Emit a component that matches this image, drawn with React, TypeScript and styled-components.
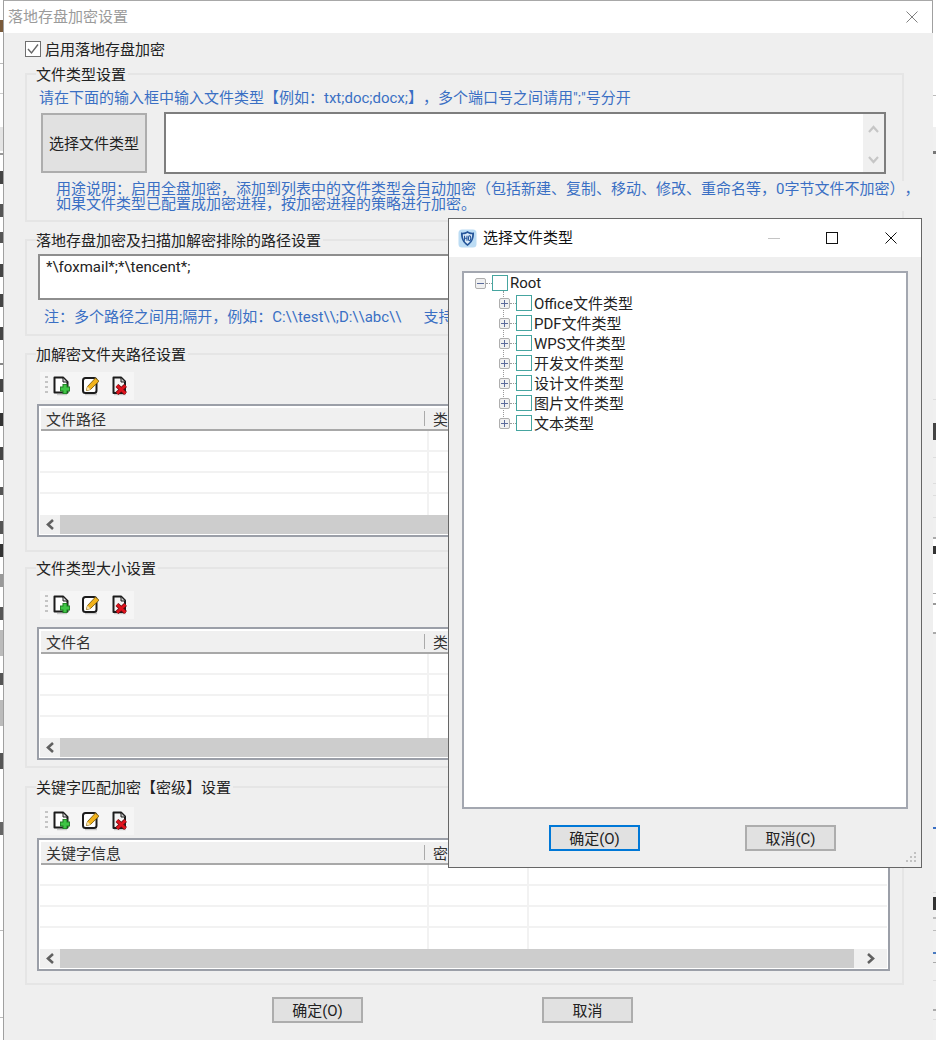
import * as React from "react"
import styled, {createGlobalStyle} from "styled-components";

const FONT = `Roboto, "Noto Sans CJK SC", sans-serif`

const GlobalStyle = createGlobalStyle`
  html, body {
    margin: 0;
    padding: 0;
    background: #fff;
  }
  body {
    font: normal normal 400 15px/16px ${FONT};
    color: #222;
    text-spacing-trim: space-all;
  }
  * {
    box-sizing: border-box;
  }
`

const treeItems = ['Office文件类型', 'PDF文件类型', 'WPS文件类型', '开发文件类型', '设计文件类型', '图片文件类型', '文本类型']

// slices of the window behind, only a few pixels of it stay visible
const leftMarks = [
  {top: 20, height: 12, color: '#7a5a3a'}, {top: 63, height: 1, color: '#bbb'}, {top: 93, height: 1, color: '#ccc'},
  {top: 127, height: 24, color: '#e4e4e4'}, {top: 153, height: 2, color: '#999'}, {top: 171, height: 13, color: '#444'},
  {top: 204, height: 13, color: '#555'}, {top: 232, height: 11, color: '#555'}, {top: 264, height: 13, color: '#444'},
  {top: 294, height: 13, color: '#444'}, {top: 327, height: 13, color: '#444'}, {top: 363, height: 2, color: '#888'},
  {top: 379, height: 13, color: '#444'}, {top: 413, height: 13, color: '#333'}, {top: 447, height: 13, color: '#444'},
  {top: 487, height: 8, color: '#555'}, {top: 521, height: 13, color: '#555'}, {top: 544, height: 13, color: '#333'},
  {top: 574, height: 13, color: '#999'}, {top: 607, height: 13, color: '#555'}, {top: 630, height: 26, color: '#bbb'},
  {top: 673, height: 12, color: '#555'}, {top: 700, height: 26, color: '#bbb'}, {top: 753, height: 16, color: '#555'},
  {top: 822, height: 13, color: '#666'}, {top: 930, height: 1, color: '#bbb'}, {top: 1017, height: 1, color: '#bbb'},
]

const rightMarks = [
  {top: 95, height: 1, color: '#bbb'}, {top: 151, height: 3, color: '#777'}, {top: 399, height: 1, color: '#ddd'},
  {top: 423, height: 17, color: '#444'}, {top: 457, height: 1, color: '#ddd'}, {top: 483, height: 1, color: '#ddd'},
  {top: 495, height: 1, color: '#ddd'}, {top: 517, height: 1, color: '#ddd'}, {top: 537, height: 2, color: '#aaa'},
  {top: 546, height: 8, color: '#333'}, {top: 593, height: 1, color: '#aaa'}, {top: 603, height: 2, color: '#999'},
  {top: 632, height: 2, color: '#aaa'}, {top: 827, height: 2, color: '#3a6fc4'}, {top: 892, height: 1, color: '#ddd'},
  {top: 897, height: 13, color: '#333'}, {top: 917, height: 2, color: '#bbb'}, {top: 930, height: 1, color: '#bbb'},
  {top: 952, height: 2, color: '#4a7ac0'}, {top: 962, height: 1, color: '#aaa'}, {top: 980, height: 1, color: '#ddd'},
  {top: 1009, height: 2, color: '#aaa'}, {top: 1019, height: 1, color: '#ddd'},
]

const AddIcon = () => (
  <svg width="20" height="20" viewBox="0 0 20 20">
    <path d="M5 18.5 H15" stroke="#c8c8c8" strokeWidth="1.5" fill="none" />
    <path d="M2.5 1.5 H11 L15.5 6 V16.5 H2.5 Z" fill="#fff" stroke="#1c1c1c" strokeWidth="2" strokeLinejoin="round" />
    <path d="M11 2 V6 H15" fill="#ddd" stroke="#1c1c1c" strokeWidth="1" />
    <path d="M13 8 V18 M8 13 H18" stroke="#1f7a22" strokeWidth="5" fill="none" />
    <path d="M13 8.8 V17.2 M8.8 13 H17.2" stroke="#3fc545" strokeWidth="3" fill="none" />
  </svg>
)

const EditIcon = () => (
  <svg width="20" height="20" viewBox="0 0 20 20">
    <path d="M4 18.5 H16" stroke="#c8c8c8" strokeWidth="1.5" fill="none" />
    <rect x="2" y="2" width="13.5" height="15" rx="2.5" fill="#fff" stroke="#1c1c1c" strokeWidth="2" />
    <path d="M5.5 14.5 L6.5 10.5 L14.5 2 L18 5.2 L9.5 13.5 Z" fill="#f2b31c" stroke="#7a5c10" strokeWidth="0.9" strokeLinejoin="round" />
    <path d="M5.5 14.5 L6.5 10.5 L9.5 13.5 Z" fill="#fae3a6" />
  </svg>
)

const DeleteIcon = () => (
  <svg width="20" height="20" viewBox="0 0 20 20">
    <path d="M4 18.5 H16" stroke="#c8c8c8" strokeWidth="1.5" fill="none" />
    <path d="M3.5 1.5 H11 L15 5.5 V17 H3.5 Z" fill="#f4f4f4" stroke="#1c1c1c" strokeWidth="2" strokeLinejoin="round" />
    <path d="M11 2 V6 H15" fill="#ccc" stroke="#1c1c1c" strokeWidth="1" />
    <path d="M7 9.5 L15.5 17.5 M15.5 9.5 L7 17.5" stroke="#6a0a0e" strokeWidth="4.2" fill="none" />
    <path d="M7 9.5 L15.5 17.5 M15.5 9.5 L7 17.5" stroke="#e0141e" strokeWidth="2.6" fill="none" />
  </svg>
)

const CloseIcon = ({color}: {color: string}) => (
  <svg width="12" height="12" viewBox="0 0 12 12">
    <path d="M0.5 0.5 L11.5 11.5 M11.5 0.5 L0.5 11.5" stroke={color} strokeWidth="1" fill="none" />
  </svg>
)

const ChevronUp = () => (
  <svg width="11" height="8" viewBox="0 0 11 8">
    <path d="M1 7 L5.5 2 L10 7" stroke="#c6c6c6" strokeWidth="2.2" fill="none" />
  </svg>
)

const ChevronDown = () => (
  <svg width="11" height="8" viewBox="0 0 11 8">
    <path d="M1 1 L5.5 6 L10 1" stroke="#c6c6c6" strokeWidth="2.2" fill="none" />
  </svg>
)

const ChevronSide = ({right}: {right?: boolean}) => (
  <svg width="9" height="11" viewBox="0 0 9 11">
    <path d={right ? "M2 1 L7 5.5 L2 10" : "M7 1 L2 5.5 L7 10"} stroke="#606060" strokeWidth="2.6" fill="none" />
  </svg>
)

const ShieldIcon = () => (
  <svg width="19" height="19" viewBox="0 0 19 19">
    <rect x="0.5" y="0.5" width="18" height="18" rx="3.5" fill="#bcdcf4" />
    <path d="M9.5 2 C11.5 3.6 13.6 3.9 16 3.6 C16.3 9.5 14.2 14 9.5 17 C4.8 14 2.7 9.5 3 3.6 C5.4 3.9 7.5 3.6 9.5 2 Z" fill="#25559a" />
    <path d="M9.5 4 C11 5.1 12.6 5.4 14.2 5.3 C14.3 9.4 12.9 12.7 9.5 15 C6.1 12.7 4.7 9.4 4.8 5.3 C6.4 5.4 8 5.1 9.5 4 Z" fill="#dcebf8" />
    <path d="M6.5 6.8 V11.8 M6.5 9.2 H9 M9 6.8 V11.8 M11.4 6.8 C13.2 6.8 13.2 11.8 11.4 11.8 C10.2 11.8 10.2 6.8 11.4 6.8 Z" fill="none" stroke="#25559a" strokeWidth="1.1" />
  </svg>
)

const FileTable = ({first, second}: {first: string, second: string}) => (
  <Table>
    <HeaderRow>
      <HeaderCell $width={384}>{first}</HeaderCell>
      <HeaderCell $width={100} $pad={8}>{second}</HeaderCell>
      <HeaderCell />
    </HeaderRow>
    <Rows>
      {[0, 1, 2, 3].map(i => (
        <Row key={i}>
          <Cell $width={389} />
          <Cell $width={100} />
          <Cell />
        </Row>
      ))}
    </Rows>
    <HScroll>
      <ScrollButton $width={20}><ChevronSide /></ScrollButton>
      <ScrollThumb />
      <ScrollButton $width={33}><ChevronSide right /></ScrollButton>
    </HScroll>
  </Table>
)

const ToolStrip = ({gap}: {gap: number}) => (
  <Toolbar $gap={gap}>
    <Grip />
    <ToolButton><AddIcon /></ToolButton>
    <ToolButton><EditIcon /></ToolButton>
    <ToolButton><DeleteIcon /></ToolButton>
  </Toolbar>
)

const App = () => {
  return (
    <Page>
      <GlobalStyle />
      <LeftStrip>
        {leftMarks.map(mark => (
          <StripMark key={mark.top} style={{top: mark.top, height: mark.height, background: mark.color}} />
        ))}
      </LeftStrip>
      <Window>
        <TitleBar>
          <WindowTitle>落地存盘加密设置</WindowTitle>
          <CloseIcon color="#808080" />
        </TitleBar>
        <Body>
          <EnableRow>
            <CheckBox>
              <svg width="12" height="12" viewBox="0 0 12 12">
                <path d="M1 6 L4.5 10 L11 1.5" stroke="#666" strokeWidth="1.4" fill="none" />
              </svg>
            </CheckBox>
            <EnableText>启用落地存盘加密</EnableText>
          </EnableRow>

          <Group $top={14} $bottom={9}>
            <Legend>文件类型设置</Legend>
            <BlueText $left={2}>请在下面的输入框中输入文件类型【例如：txt;doc;docx;】，多个端口号之间请用";"号分开</BlueText>
            <TypeRow>
              <TypeButton>选择文件类型</TypeButton>
              <TypeArea>
                <VScroll>
                  <ChevronUp />
                  <ChevronDown />
                </VScroll>
              </TypeArea>
            </TypeRow>
            <Usage>
              <div>用途说明：启用全盘加密，添加到列表中的文件类型会自动加密（包括新建、复制、移动、修改、重命名等，0字节文件不加密），</div>
              <div>如果文件类型已配置成加密进程，按加密进程的策略进行加密。</div>
            </Usage>
          </Group>

          <Group $margin={17} $top={13} $bottom={10}>
            <Legend>落地存盘加密及扫描加解密排除的路径设置</Legend>
            <PathInput>*\foxmail*;*\tencent*;</PathInput>
            <BlueText $left={7} $margin={8}>注：多个路径之间用;隔开，例如：C:\\test\\;D:\\abc\\<Spacer />支持通配符</BlueText>
          </Group>

          <Group $margin={17} $top={17} $bottom={13}>
            <Legend>加解密文件夹路径设置</Legend>
            <ToolStrip gap={4} />
            <FileTable first="文件路径" second="类型" />
          </Group>

          <Group $margin={15} $top={22} $bottom={6}>
            <Legend>文件类型大小设置</Legend>
            <ToolStrip gap={8} />
            <FileTable first="文件名" second="类型" />
          </Group>

          <Group $margin={18} $top={19} $bottom={12}>
            <Legend>关键字匹配加密【密级】设置</Legend>
            <ToolStrip gap={3} />
            <FileTable first="关键字信息" second="密级" />
          </Group>

          <Footer>
            <PushButton>确定(O)</PushButton>
            <PushButton>取消</PushButton>
          </Footer>
        </Body>
      </Window>
      <RightStrip>
        <RightWhite $top={0} $height={127} />
        <RightWhite $top={537} $height={96} />
        {rightMarks.map(mark => (
          <StripMark key={mark.top} style={{top: mark.top, height: mark.height, background: mark.color}} />
        ))}
      </RightStrip>

      <Dialog>
        <DialogTitleBar>
          <ShieldIcon />
          <DialogTitle>选择文件类型</DialogTitle>
          <Controls>
            <Minimize />
            <Maximize />
            <CloseIcon color="#111" />
          </Controls>
        </DialogTitleBar>
        <DialogBody>
          <TreeBox>
            <TreeRow>
              <Expander $open />
              <TreeCheck />
              <span>Root</span>
            </TreeRow>
            <TreeChildren>
              {treeItems.map(item => (
                <TreeRow key={item}>
                  <Expander />
                  <TreeCheck />
                  <span>{item}</span>
                </TreeRow>
              ))}
            </TreeChildren>
          </TreeBox>
          <DialogFooter>
            <PushButton $focused>确定(O)</PushButton>
            <PushButton>取消(C)</PushButton>
          </DialogFooter>
          <ResizeGrip>
            <svg width="12" height="12" viewBox="0 0 12 12">
              <path d="M9 1 h2 v2 h-2 Z M5 5 h2 v2 h-2 Z M9 5 h2 v2 h-2 Z M1 9 h2 v2 h-2 Z M5 9 h2 v2 h-2 Z M9 9 h2 v2 h-2 Z" fill="#c2c2c2" />
            </svg>
          </ResizeGrip>
        </DialogBody>
      </Dialog>
    </Page>
  )
}

const Page = styled.div`
  position: relative;
  display: flex;
  width: 936px;
  height: 1040px;
  overflow: hidden;
  background: #fff;
`
const LeftStrip = styled.div`
  position: relative;
  width: 3px;
  flex: none;
  background: #fff;
`
const StripMark = styled.div`
  position: absolute;
  left: 0;
  width: 3px;
`
const RightStrip = styled.div`
  position: relative;
  flex: 1;
  background: #f0f0f0;
`
const RightWhite = styled.div<{$top: number, $height: number}>`
  position: absolute;
  left: 0;
  right: 0;
  top: ${props => props.$top}px;
  height: ${props => props.$height}px;
  background: #fff;
`
const Window = styled.div`
  width: 930px;
  flex: none;
  display: flex;
  flex-direction: column;
  border-top: 1px solid #a8a8a8;
  border-left: 1px solid #a0a0a0;
`
const TitleBar = styled.div`
  height: 32px;
  flex: none;
  display: flex;
  align-items: center;
  justify-content: space-between;
  padding: 0 14px 0 4px;
  background: #fff;
  border-right: 1px solid #a0a0a0;
`
const WindowTitle = styled.div`
  color: #9b9b9b;
  font-size: 15px;
`
const Body = styled.div`
  flex: 1;
  background: #efefef;
  padding: 8px 29px 0 21px;
`
const EnableRow = styled.label`
  display: flex;
  align-items: center;
  height: 16px;
  gap: 4px;
  color: #222;
`
const EnableText = styled.span`
  padding-top: 2px;
`
const CheckBox = styled.span`
  width: 16px;
  height: 16px;
  flex: none;
  display: flex;
  align-items: center;
  justify-content: center;
  background: #fff;
  border: 1.5px solid #6f6f6f;
`
const Group = styled.div<{$margin?: number, $top: number, $bottom: number}>`
  position: relative;
  margin-top: ${props => props.$margin ?? 16}px;
  padding: ${props => props.$top}px 12px ${props => props.$bottom}px 10px;
  border: 2px solid #e5e5e5;
`
const Legend = styled.div`
  position: absolute;
  top: -8px;
  left: 9px;
  padding: 0 2px 0 0;
  height: 17px;
  line-height: 17px;
  background: #efefef;
  color: #222;
`
const BlueText = styled.div<{$left: number, $margin?: number}>`
  margin-top: ${props => props.$margin ?? 0}px;
  padding-left: ${props => props.$left}px;
  height: 16px;
  line-height: 18px;
  white-space: nowrap;
  color: #3a6fc4;
`
const Spacer = styled.span`
  display: inline-block;
  width: 22px;
`
const TypeRow = styled.div`
  display: flex;
  align-items: center;
  gap: 17px;
  margin: 7px 0 0 4px;
`
const TypeButton = styled.div`
  width: 106px;
  height: 60px;
  display: flex;
  align-items: center;
  justify-content: center;
  padding-top: 2px;
  background: #e1e1e1;
  border: 2px solid #adadad;
`
const TypeArea = styled.div`
  width: 722px;
  height: 62px;
  display: flex;
  justify-content: flex-end;
  background: #fff;
  border: 2px solid #7e7e7e;
`
const VScroll = styled.div`
  width: 21px;
  display: flex;
  flex-direction: column;
  align-items: center;
  justify-content: space-between;
  padding: 11px 0 8px;
  background: #f0f0f0;
`
const Usage = styled.div`
  position: relative;
  margin: 7px -23px 0 19px;
  padding-top: 1px;
  height: 30px;
  line-height: 15px;
  white-space: nowrap;
  background: #efefef;
  color: #3a6fc4;
`
const PathInput = styled.div`
  height: 46px;
  margin-left: 1px;
  margin-right: 5px;
  padding: 3px 6px;
  background: #fff;
  border: 2px solid #8e8e8e;
  color: #222;
`
const Toolbar = styled.div<{$gap: number}>`
  display: flex;
  align-items: center;
  width: 94px;
  height: 28px;
  margin: 0 0 ${props => props.$gap}px 3px;
  padding-left: 5px;
  background: #f5f5f5;
`
const Grip = styled.div`
  width: 3px;
  height: 20px;
  margin-right: -1px;
  background: repeating-linear-gradient(to bottom, #c4c4c4 0 2px, transparent 2px 5px);
`
const ToolButton = styled.div`
  width: 29px;
  display: flex;
  justify-content: center;
`
const Table = styled.div`
  height: 133px;
  display: flex;
  flex-direction: column;
  background: #fff;
  border: 2px solid #9b9fa8;
  padding: 2px 1px 1px;
`
const HeaderRow = styled.div`
  height: 23px;
  flex: none;
  display: flex;
  margin-left: 1px;
  background: #f0f0f0;
  border-bottom: 2px solid #a8a8a8;
`
const HeaderCell = styled.div<{$width?: number, $pad?: number}>`
  ${props => props.$width ? `width: ${props.$width}px;` : 'flex: 1;'}
  padding: 2px 0 0 ${props => props.$pad ?? 5}px;
  line-height: 20px;
  color: #333;
  background: linear-gradient(#aaa, #aaa) right 3px / 1px 15px no-repeat;
`
const Rows = styled.div`
  flex: 1;
  overflow: hidden;
`
const Row = styled.div`
  display: flex;
  height: 21px;
  border-bottom: 2px solid #f2f2f2;

  &:last-of-type {
    border-bottom: 0;
  }
`
const Cell = styled.div<{$width?: number}>`
  ${props => props.$width ? `width: ${props.$width}px; border-right: 2px solid #f2f2f2;` : 'flex: 1;'}
`
const HScroll = styled.div`
  height: 19px;
  flex: none;
  display: flex;
  background: #f0f0f0;
`
const ScrollButton = styled.div<{$width: number}>`
  width: ${props => props.$width}px;
  display: flex;
  align-items: center;
  justify-content: center;
`
const ScrollThumb = styled.div`
  flex: 1;
  background: #cdcdcd;
`
const Footer = styled.div`
  display: flex;
  gap: 179px;
  margin: 12px 0 0 247px;
`
const PushButton = styled.div<{$focused?: boolean}>`
  width: 91px;
  height: 26px;
  display: flex;
  align-items: center;
  justify-content: center;
  padding-top: 2px;
  background: #e1e1e1;
  border: 2px solid ${props => props.$focused ? '#0078d7' : '#adadad'};
  color: #222;
`
const Dialog = styled.div`
  position: absolute;
  left: 448px;
  top: 218px;
  width: 474px;
  height: 650px;
  display: flex;
  flex-direction: column;
  border: 1px solid #666;
  background: #efefef;
`
const DialogTitleBar = styled.div`
  height: 38px;
  flex: none;
  display: flex;
  align-items: center;
  padding-left: 9px;
  background: #fff;
`
const DialogTitle = styled.div`
  margin-left: 6px;
  color: #111;
`
const Controls = styled.div`
  margin-left: auto;
  display: flex;
  align-items: center;
  padding-right: 24px;
`
const Minimize = styled.div`
  width: 12px;
  height: 1px;
  margin-right: 46px;
  background: #c4c4c4;
`
const Maximize = styled.div`
  width: 12px;
  height: 12px;
  margin-right: 47px;
  border: 1px solid #111;
`
const DialogBody = styled.div`
  position: relative;
  flex: 1;
  padding: 14px 13px 0;
  display: flex;
  flex-direction: column;
`
const TreeBox = styled.div`
  height: 538px;
  padding: 0 11px;
  background: #fff;
  border: 2px solid #a3a7b0;
  color: #222;
`
const TreeChildren = styled.div`
  position: relative;
  padding-left: 24px;

  &::before {
    content: '';
    position: absolute;
    left: 28px;
    top: -2px;
    height: 130px;
    border-left: 1px dotted #999;
  }

  span {
    padding-top: 2px;
  }
`
const TreeRow = styled.div`
  position: relative;
  display: flex;
  align-items: center;
  height: 20px;
`
const Expander = styled.div<{$open?: boolean}>`
  position: relative;
  z-index: 1;
  width: 11px;
  height: 11px;
  flex: none;
  margin-right: 6px;
  background: ${props => props.$open
    ? 'linear-gradient(#5a6a9a, #5a6a9a) center / 7px 1px no-repeat'
    : 'linear-gradient(#5a6a9a, #5a6a9a) center / 7px 1px no-repeat, linear-gradient(#5a6a9a, #5a6a9a) center / 1px 7px no-repeat'} #f0f0f0;
  border: 1px solid #aeaeae;
  border-radius: 2px;

  &::after {
    content: '';
    position: absolute;
    left: 10px;
    top: 4px;
    width: 6px;
    border-top: 1px dotted #999;
  }
`
const TreeCheck = styled.div`
  width: 16px;
  height: 16px;
  flex: none;
  margin-right: 2px;
  background: #fff;
  border: 1.5px solid #46a5a0;
`
const DialogFooter = styled.div`
  display: flex;
  justify-content: space-between;
  margin-top: 16px;
  padding: 0 72px 0 87px;
`
const ResizeGrip = styled.div`
  position: absolute;
  right: 4px;
  bottom: 4px;
  line-height: 0;
`

export default App
